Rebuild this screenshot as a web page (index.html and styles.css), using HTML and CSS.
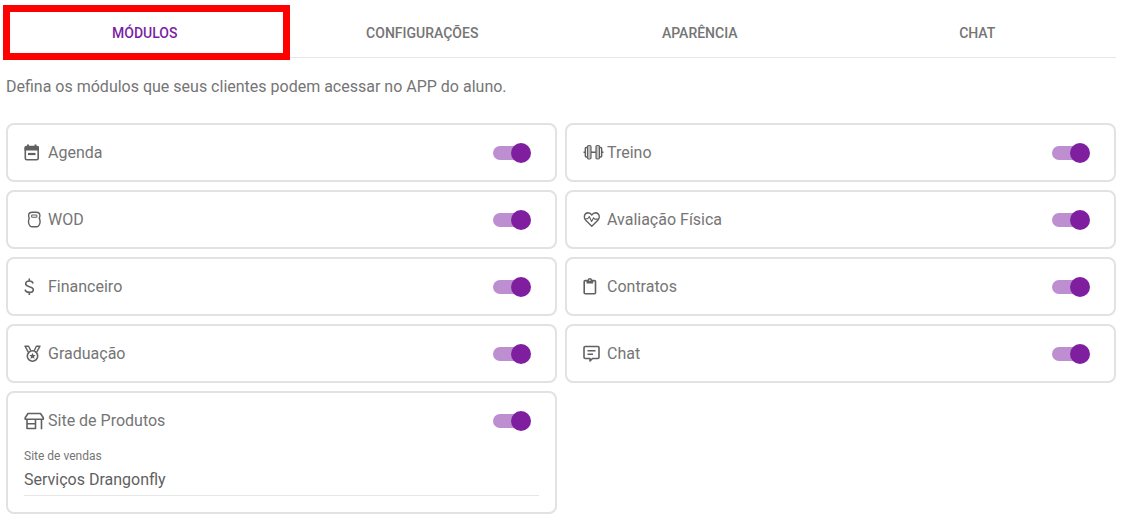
FILE: index.html
```html
<!DOCTYPE html>
<html lang="pt-BR">
<head>
  <meta charset="UTF-8" />
  <meta name="viewport" content="width=device-width, initial-scale=1.0"/>
  <title>Módulos do APP</title>
  <link rel="stylesheet" href="styles.css">
</head>
<body>
  <div class="tabs" role="tablist">
    <button type="button" class="tab active" role="tab" aria-selected="true">MÓDULOS</button>
    <button type="button" class="tab" role="tab" aria-selected="false">CONFIGURAÇÕES</button>
    <button type="button" class="tab" role="tab" aria-selected="false">APARÊNCIA</button>
    <button type="button" class="tab" role="tab" aria-selected="false">CHAT</button>
  </div>

  <p class="description">Defina os módulos que seus clientes podem acessar no APP do aluno.</p>

  <div class="modules">
    <div class="card">
      <div class="module">
        <svg class="icon" viewBox="0 0 24 24" aria-hidden="true">
          <rect x="1.3" y="5.5" width="12.9" height="13.2" rx="1.5"/>
          <path class="solid" d="M.5 6.500q0-1.500 1.500-1.500h11.500q1.500 0 1.500 1.500V9.500H.5zM3 3.500h2v3H3zM10.500 3.500h2v3h-2z"/>
          <path class="thick" d="M4 13h7.500"/>
        </svg>
        <label for="agenda">Agenda</label>
        <input type="checkbox" class="switch" id="agenda" checked />
      </div>
    </div>

    <div class="card">
      <div class="module">
        <svg class="icon" viewBox="0 0 24 24" aria-hidden="true">
          <rect class="plate" x="4.5" y="4.5" width="3.5" height="13.5" rx="1.2"/>
          <rect class="plate" x="13" y="4.5" width="3.5" height="13.5" rx="1.2"/>
          <path class="outline" d="M4.500 6.500H3.300q-1 0-1 1v7.500q0 1 1 1h1.200M16.500 6.500h1.200q1 0 1 1v7.500q0 1-1 1h-1.200"/>
          <path d="M8 11.200h5M.5 11.200h2M18.500 11.200h2"/>
        </svg>
        <label for="treino">Treino</label>
        <input type="checkbox" class="switch" id="treino" checked />
      </div>
    </div>

    <div class="card">
      <div class="module">
        <svg class="icon" viewBox="0 0 24 24" aria-hidden="true">
          <path class="outline" d="M5.300 10.200C4.800 9.200 4.600 8.500 4.600 7.500 4.600 5.500 6.200 4.200 8.300 4.200h3.900c2.100 0 3.700 1.300 3.700 3.300 0 1-.2 1.700-.7 2.700.6 1 .9 2.200.9 3.500 0 1.700-.5 3.200-1.600 4.300-.6.600-1.200.8-2 .8H8.100c-.8 0-1.400-.2-2-.8-1.100-1.100-1.600-2.600-1.600-4.300 0-1.300.2-2.500.8-3.500z"/>
          <rect class="thin" x="7.600" y="7" width="5.300" height="2.300" rx=".8"/>
        </svg>
        <label for="wod">WOD</label>
        <input type="checkbox" class="switch" id="wod" checked />
      </div>
    </div>

    <div class="card">
      <div class="module">
        <svg class="icon" viewBox="0 0 24 24" aria-hidden="true">
          <path class="outline" d="M8.800 18.200 2.500 12C.4 9.900 1 5 5 4.800c1.700 0 2.900.8 3.800 2.200.9-1.400 2.100-2.200 3.800-2.200 4 .2 4.600 5.100 2.500 7.200z"/>
          <path class="thin" d="M1.500 10.700h3.300l1.500-2.200 2.300 5 2-3.700 1.200 1.300H16"/>
        </svg>
        <label for="avaliacao">Avaliação Física</label>
        <input type="checkbox" class="switch" id="avaliacao" checked />
      </div>
    </div>

    <div class="card">
      <div class="module">
        <svg class="icon" viewBox="0 0 24 24" aria-hidden="true">
          <path d="M5.300 3.500v2.500M5.300 17.300v2.700M9 8.500C8.700 7 7.400 6 5.400 6 3.200 6 1.700 7 1.700 8.700c0 4 7.600 2 7.600 6 0 1.700-1.700 2.700-4 2.700-2.300 0-3.900-1-4.200-2.700"/>
        </svg>
        <label for="financeiro">Financeiro</label>
        <input type="checkbox" class="switch" id="financeiro" checked />
      </div>
    </div>

    <div class="card">
      <div class="module">
        <svg class="icon" viewBox="0 0 24 24" aria-hidden="true">
          <rect x="1.200" y="5.600" width="11.300" height="13.200" rx="1"/>
          <path class="solid" d="M3.500 5h1a2.400 2.400 0 0 1 4.700 0h1v3.500H3.500z"/>
          <circle class="hole" cx="6.850" cy="5.300" r=".8"/>
        </svg>
        <label for="contratos">Contratos</label>
        <input type="checkbox" class="switch" id="contratos" checked />
      </div>
    </div>

    <div class="card">
      <div class="module">
        <svg class="icon" viewBox="0 0 24 24" aria-hidden="true">
          <circle cx="8.500" cy="14" r="5.200"/>
          <path class="solid" d="m8.500 10.900 1 2 2.200.2-1.700 1.500.5 2.200-2-1.100-2 1.100.5-2.200-1.700-1.500 2.200-.2z"/>
          <path class="outline" d="M4.300 10.200 1 4.200h3.600l2.200 4.600M12.700 10.200l3.300-6h-3.600l-2.200 4.600"/>
        </svg>
        <label for="graduacao">Graduação</label>
        <input type="checkbox" class="switch" id="graduacao" checked />
      </div>
    </div>

    <div class="card">
      <div class="module">
        <svg class="icon" viewBox="0 0 24 24" aria-hidden="true">
          <path d="M2.200 4.500h12.600a1.200 1.200 0 0 1 1.200 1.200v9.600a1.200 1.200 0 0 1-1.200 1.200H9.500L7 19v-2.500H2.200A1.200 1.200 0 0 1 1 15.300V5.700a1.200 1.200 0 0 1 1.200-1.200zM4.500 8.800h8M4.500 12.200h5.500"/>
        </svg>
        <label for="chat">Chat</label>
        <input type="checkbox" class="switch" id="chat" checked />
      </div>
    </div>

    <div class="card">
      <div class="module">
        <svg class="icon" viewBox="0 0 24 24" aria-hidden="true">
          <path d="M4 4.500h12.500l2.800 4.200v1.500H1.200V8.700zM3 10.200v9.300h8.500v-9.300M3 14.700h8.500M17.500 10.200v10"/>
        </svg>
        <label for="site">Site de Produtos</label>
        <input type="checkbox" class="switch" id="site" checked />
      </div>
      <div class="field">
        <label for="siteVendas">Site de vendas</label>
        <input type="text" id="siteVendas" value="Serviços Drangonfly" autocomplete="off" />
      </div>
    </div>
  </div>
</body>
</html>
```

FILE: styles.css
```css
* {
  box-sizing: border-box;
}

body {
  background-color: #fff;
  color: #757575;
  font-family: Roboto, sans-serif;
  font-size: 16px;
  margin: 0;
  padding: 9px 7px 12px 6px;
}

.tabs {
  display: grid;
  grid-template-columns: repeat(4, 1fr);
  border-bottom: 1px solid #e6e6e6;
}

.tab {
  position: relative;
  height: 48px;
  padding: 0;
  border: none;
  background: none;
  color: #757575;
  font-family: inherit;
  font-size: 14px;
  font-weight: 500;
  cursor: pointer;
}

.tab.active {
  color: #7b1fa2;
}

/* red marker around the current tab */
.tab.active::after {
  content: "";
  position: absolute;
  top: -4px;
  right: -6px;
  bottom: -3px;
  left: -3px;
  border: 7px solid #f00;
}

.description {
  margin: 17px 0 24px;
  line-height: 24px;
}

.modules {
  display: grid;
  grid-template-columns: 1fr 1fr;
  gap: 8px;
}

.card {
  border: 2px solid #e2e2e2;
  border-radius: 8px;
  padding: 0 16px;
}

.module {
  display: flex;
  align-items: center;
  height: 55px;
  padding-right: 8px;
}

.module label {
  flex: 1;
}

.icon {
  width: 24px;
  height: 24px;
  fill: none;
  stroke: #616161;
  stroke-width: 1.6;
  stroke-linejoin: round;
}

.icon .thin {
  stroke-width: 1.1;
}

.icon .outline {
  stroke-width: 1.4;
}

.icon .thick {
  stroke-width: 2.2;
}

.icon .plate {
  fill: #c4c4c4;
  stroke-width: 1.2;
}

.icon .solid {
  fill: #616161;
  stroke: none;
}

.icon .hole {
  fill: #fff;
  stroke: none;
}

/* Switch */
.switch {
  appearance: none;
  display: flex;
  align-items: center;
  position: relative;
  width: 38px;
  height: 20px;
  margin: 0;
  cursor: pointer;
}

.switch::before {
  content: "";
  width: 34px;
  height: 14px;
  border-radius: 7px;
  background-color: #bdbdbd;
}

.switch::after {
  content: "";
  position: absolute;
  left: 0;
  width: 20px;
  height: 20px;
  border-radius: 50%;
  background-color: #fafafa;
}

.switch:checked::before {
  background-color: #be8fd0;
}

.switch:checked::after {
  left: 18px;
  background-color: #7f1fa0;
}

.field {
  display: flex;
  flex-direction: column;
  padding-bottom: 16px;
}

.field label {
  font-size: 12px;
  line-height: 16px;
}

.field input {
  width: 100%;
  height: 32px;
  padding: 0;
  border: none;
  border-bottom: 1px solid #e6e6e6;
  outline: none;
  background: none;
  color: #5f5f5f;
  font-family: inherit;
  font-size: 16px;
}

@media (max-width: 600px) {
  .modules {
    grid-template-columns: 1fr;
  }
}
```
